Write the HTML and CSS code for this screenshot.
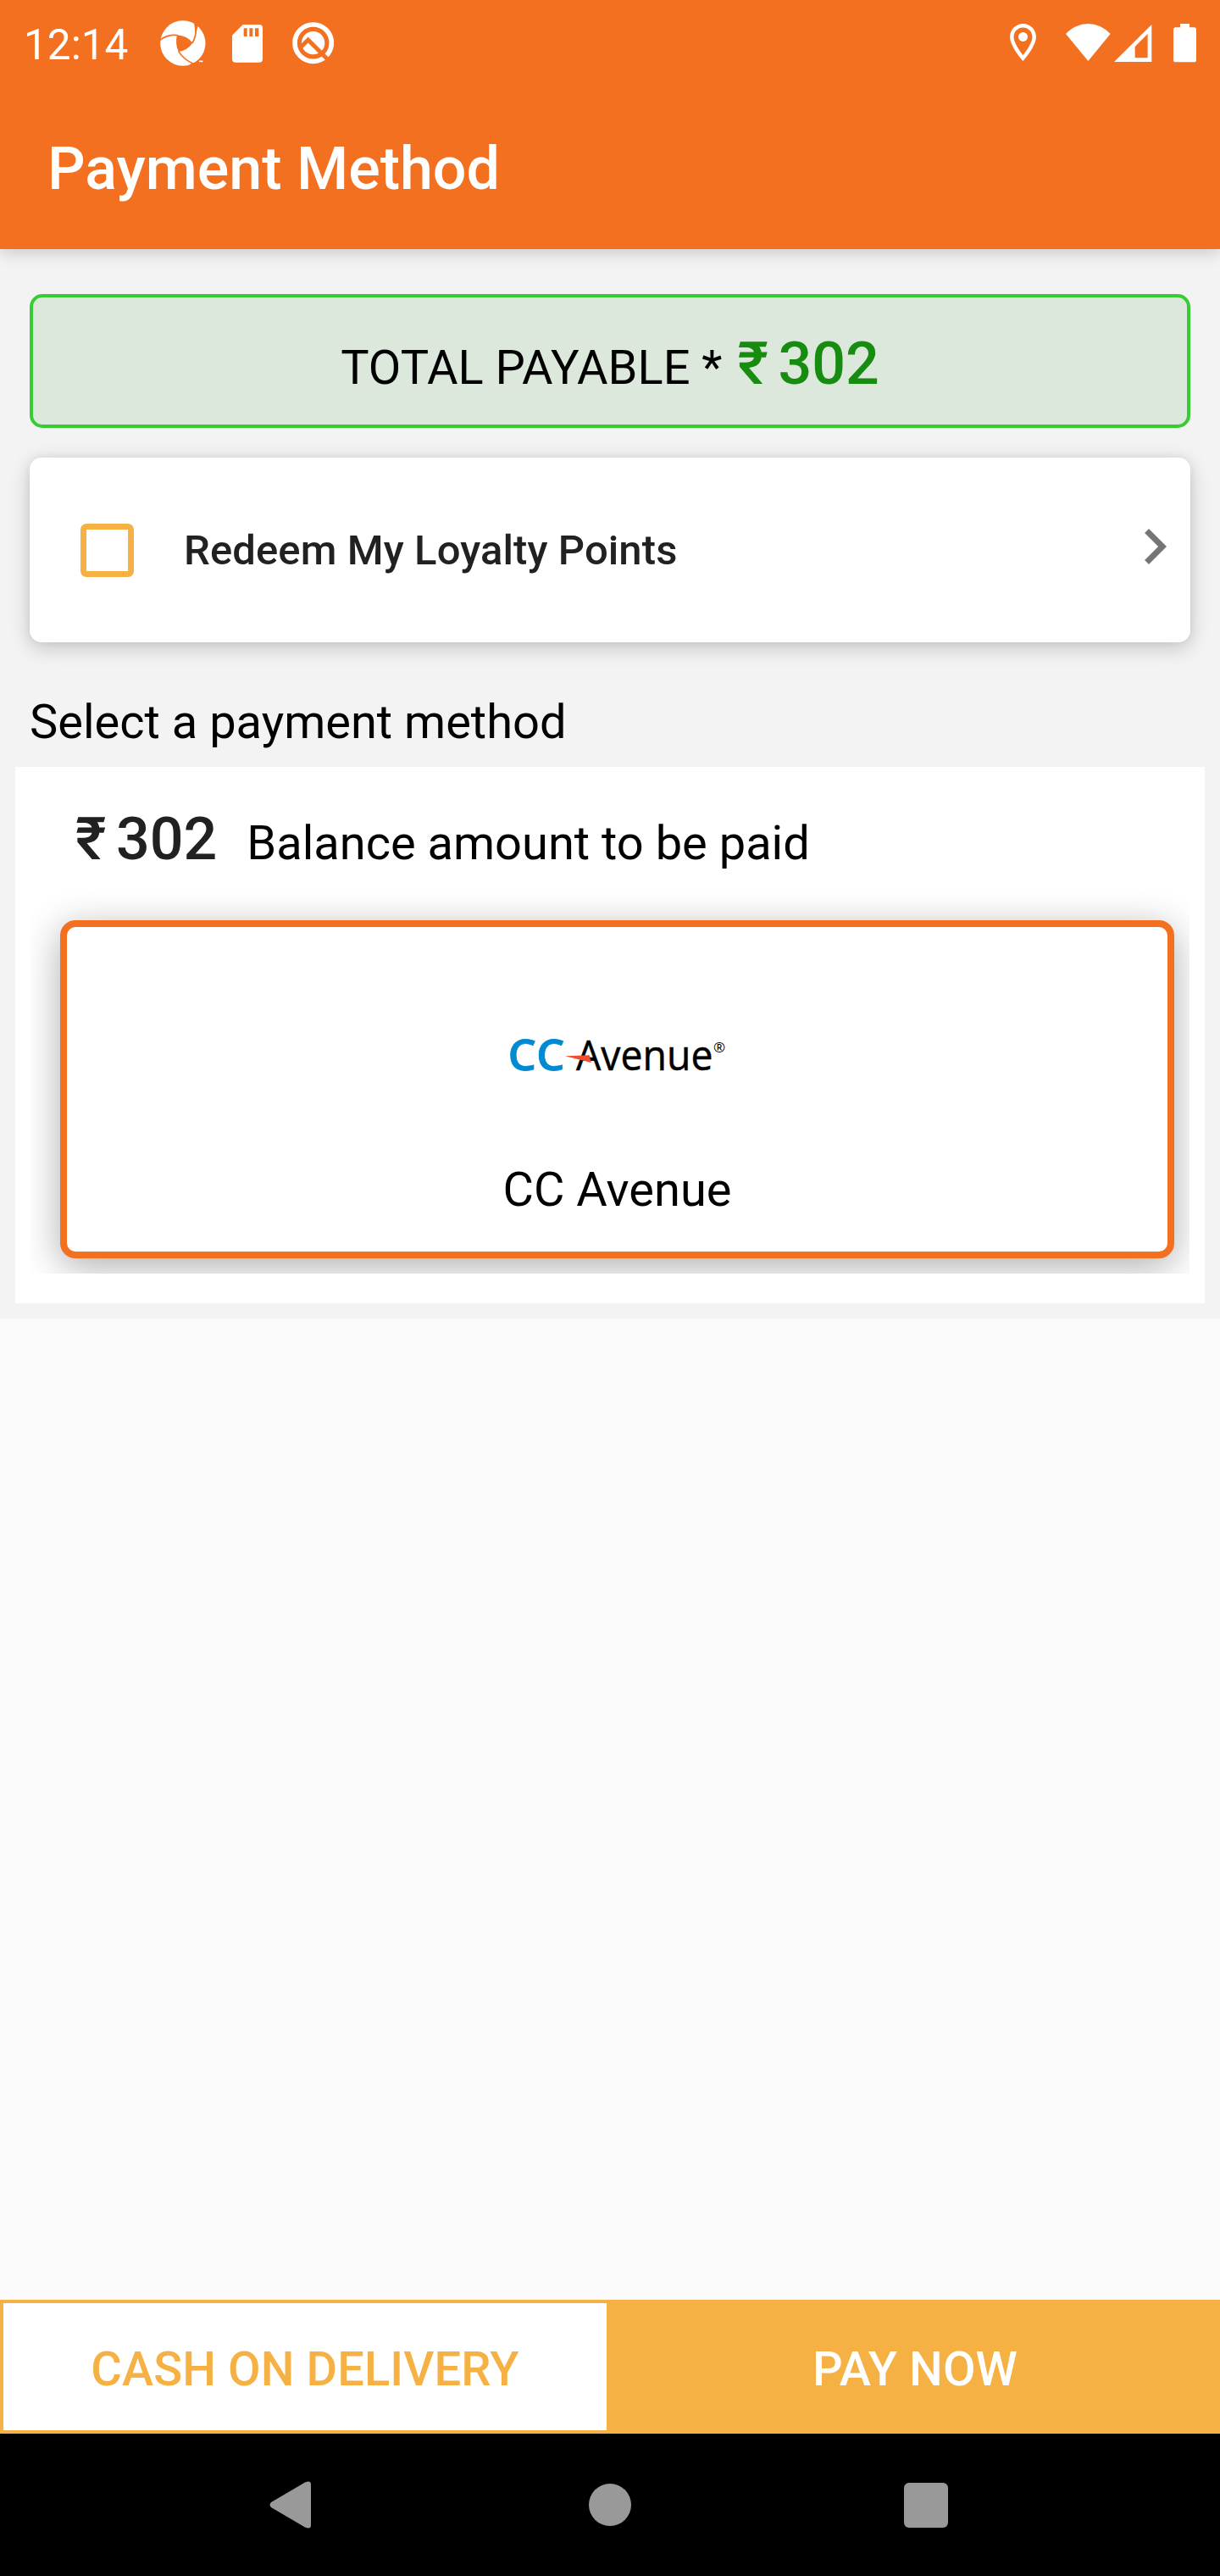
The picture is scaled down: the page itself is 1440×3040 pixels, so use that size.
FILE: index.html
```html
<!DOCTYPE html>
<html lang="en">
<head>
<meta charset="utf-8">
<title>Payment Method</title>
<link rel="stylesheet" href="styles.css">
</head>
<body>
<div class="screen">
  <header class="header">
    <div class="status">
      <span class="clock">12:14</span>
      <svg class="ic-swirl" viewBox="566 73 162 162">
        <circle cx="646.500" cy="154" r="80" fill="#fff"/>
        <path d="M626 125Q662 128 681 153Q662 180 631 184Q618 156 626 125Z" fill="#f37021"/>
        <path d="M564 143Q594 122 627 126M692 80Q698 122 680 154M631 183Q650 212 684 227" fill="none" stroke="#f37021" stroke-width="5"/>
        <path d="M686 78L700 92L691 125Z" fill="#f37021"/>
        <path d="M668 233L676 225L692 221L728 205V235Z" fill="#f37021"/>
        <path d="M704 218H717" stroke="#fff" stroke-width="5"/>
      </svg>
      <svg class="ic-sd" viewBox="823 87 108 134">
        <path d="M861 87H919Q931 87 931 99V209Q931 221 919 221H835Q823 221 823 209V125Z" fill="#fff"/>
        <path d="M864 100h12v29h-12zM884 100h12v29h-12zM904 100h13v29h-13z" fill="#f37021"/>
      </svg>
      <svg class="ic-q" viewBox="1034 79 148 148">
        <circle cx="1108" cy="153" r="65" fill="none" stroke="#fff" stroke-width="17"/>
        <circle cx="1108" cy="153" r="41" fill="#fff"/>
        <path d="M1064 168L1090 142L1162 214" fill="none" stroke="#f37021" stroke-width="15"/>
      </svg>
      <span class="spacer"></span>
      <svg class="ic-pin" viewBox="5 2 14 20">
        <path d="M12 2C8.130 2 5 5.130 5 9c0 5.250 7 13 7 13s7-7.750 7-13c0-3.870-3.130-7-7-7zM7 9c0-2.760 2.240-5 5-5s5 2.240 5 5c0 2.880-2.880 7.190-5 9.880C9.920 16.210 7 11.850 7 9z" fill="#fff"/>
        <circle cx="12" cy="9" r="2.500" fill="#fff"/>
      </svg>
      <svg class="ic-wifi" viewBox="295 85 158 132"><path d="M374 217L295 121Q330 85 374 85Q418 85 453 121Z" fill="#fff"/></svg>
      <svg class="ic-signal" viewBox="466 86 133 132"><path fill-rule="evenodd" d="M466 218L599 86V218ZM540 164V204H585V119Z" fill="#fff"/></svg>
      <svg class="ic-battery" viewBox="675 85 81 136"><path d="M699 85H732V98H748Q756 98 756 106V213Q756 221 748 221H683Q675 221 675 213V106Q675 98 683 98H699Z" fill="#fff"/></svg>
    </div>
    <h1 class="title">Payment Method</h1>
  </header>

  <main class="content">
    <section class="total">
      <span class="total-label">TOTAL PAYABLE *</span>
      <span class="total-amount">₹ 302</span>
    </section>

    <section class="loyalty">
      <span class="checkbox"></span>
      <span class="loyalty-label">Redeem My Loyalty Points</span>
      <svg class="chevron" viewBox="0 0 24 24"><path d="M10 6L8.590 7.410 13.170 12l-4.580 4.590L10 18l6-6z" fill="#757575"/></svg>
    </section>

    <h2 class="heading">Select a payment method</h2>

    <section class="panel">
      <div class="balance">
        <span class="balance-amount">₹ 302</span>
        <span class="balance-label">Balance amount to be paid</span>
      </div>
      <div class="methods">
        <div class="method">
          <svg class="logo" viewBox="600 1215 257 60">
            <text x="599.500" y="1262.500" class="logo-cc" textLength="67" lengthAdjust="spacingAndGlyphs">CC</text>
            <text x="680" y="1262.500" class="logo-avenue" textLength="161.500" lengthAdjust="spacingAndGlyphs">Avenue</text>
            <path d="M667 1246.300L695.700 1245.300L697.700 1254Z" fill="#f04e30"/>
            <text x="842" y="1242" class="logo-reg">®</text>
          </svg>
          <span class="method-name">CC Avenue</span>
        </div>
      </div>
    </section>
  </main>

  <div class="actions">
    <div class="btn btn-outline">CASH ON DELIVERY</div>
    <div class="btn btn-solid">PAY NOW</div>
  </div>

  <nav class="navbar">
    <svg class="nav-back" viewBox="0 0 49 56"><path d="M2 25L42 1.500Q49-1.500 49 4V52Q49 57.500 42 54.500L2 31Q-1 28 2 25Z" fill="#999"/></svg>
    <span class="nav-home"></span>
    <span class="nav-recent"></span>
  </nav>
</div>
</body>
</html>
```
FILE: styles.css
```css
* { box-sizing: border-box; }
body { margin: 0; font-family: Roboto, sans-serif; color: #000; }
svg { display: block; flex: none; }
.screen { width: 1440px; height: 3040px; display: flex; flex-direction: column; background: #fafafa; overflow: hidden; }

.header { flex: none; height: 294px; background: #f37021; box-shadow: 0 4px 18px rgba(0, 0, 0, .18); color: #fff; z-index: 1; }
.status { height: 98px; display: flex; align-items: flex-start; padding: 0 28px; }
.clock { font-size: 49.500px; line-height: 60px; margin-top: 23px; width: 160.500px; }
.ic-swirl { width: 54px; height: 54px; margin-top: 24.300px; }
.ic-sd { width: 36px; height: 44.700px; margin: 29px 0 0 31.800px; }
.ic-q { width: 49.300px; height: 49.300px; margin: 26.300px 0 0 34.300px; }
.spacer { flex: 1; }
.ic-pin { width: 31px; height: 44px; margin: 28.300px 35.500px 0 0; }
.ic-wifi { width: 52.700px; height: 44px; margin: 28.300px 4.300px 0 0; }
.ic-signal { width: 44.300px; height: 44px; margin: 28.700px 25.300px 0 0; }
.ic-battery { width: 27px; height: 45.300px; margin-top: 28.300px; }
.title { margin: 0; padding: 60px 56px 0; font-size: 70px; line-height: 82px; font-weight: 500; }

.content { flex: none; background: #f3f3f3; padding: 53px 0 18px; display: flex; flex-direction: column; }
.total { height: 158px; margin: 0 35px; padding-top: 37px; border: 4px solid #38cc33; border-radius: 15px; background: #dde8dd; display: flex; align-items: baseline; justify-content: center; gap: 18px; line-height: 82px; }
.total-label { font-size: 56px; }
.total-amount { font-size: 70px; font-weight: 500; color: #178c10; word-spacing: -6px; }

.loyalty { height: 218px; margin: 35px 35px 0; padding: 0 0 0 59.500px; background: #fff; border-radius: 14px; display: flex; align-items: center; box-shadow: 0 6px 24px rgba(0, 0, 0, .2), 0 0 8px rgba(0, 0, 0, .06); }
.checkbox { width: 63px; height: 63px; border: 7px solid #f6b145; border-radius: 7px; }
.loyalty-label { margin-left: 59.500px; font-size: 49px; line-height: 58px; padding-top: 1px; font-weight: 500; letter-spacing: .1px; color: #212121; }
.chevron { width: 84px; height: 84px; margin: 0 0 8px auto; }

.heading { margin: 61px 35px 20px; font-size: 56px; line-height: 66px; font-weight: 400; }

.panel { margin: 0 18px; padding: 44px 18px 35px; background: #fff; }
.balance { display: flex; align-items: baseline; padding-left: 53px; line-height: 82px; height: 82px; gap: 35px; }
.balance-amount { font-size: 70px; font-weight: 500; color: #212121; word-spacing: -6px; }
.balance-label { font-size: 56px; }
.methods { overflow: hidden; padding: 55px 18px 18px 35px; }
.method { height: 399px; border: 8px solid #f37021; border-radius: 18px; background: #fff; display: flex; flex-direction: column; align-items: center; padding-top: 121px; box-shadow: 0 10px 46px rgba(0, 0, 0, .32); }
.logo { width: 257px; height: 60px; overflow: visible; font-family: "Open Sans", "Noto Sans", sans-serif; }
.logo-cc { font-size: 50px; font-weight: 600; fill: #008ad2; stroke: #008ad2; stroke-width: .8px; }
.logo-avenue { font-size: 49px; font-weight: 500; fill: #000; stroke: #000; stroke-width: .5px; }
.logo-reg { font-size: 17px; fill: #000; }
.method-name { margin-top: 96px; font-size: 56px; line-height: 66px; }

.actions { flex: none; height: 158px; margin-top: auto; display: flex; }
.btn { flex: 1; border: 4px solid #f6b145; display: flex; align-items: center; justify-content: center; padding-top: 6px; font-size: 56px; line-height: 66px; font-weight: 500; letter-spacing: .1px; }
.btn-outline { background: #fff; color: #f6b145; }
.btn-solid { background: #f6b145; color: #fff; }

.navbar { flex: none; height: 168px; background: #000; display: flex; align-items: center; padding-left: 318px; }
.nav-back { width: 49px; height: 56px; }
.nav-home { width: 50px; height: 50px; margin-left: 328px; border-radius: 50%; background: #999; }
.nav-recent { width: 52px; height: 53px; margin-left: 322px; border-radius: 6px; background: #999; }
```
